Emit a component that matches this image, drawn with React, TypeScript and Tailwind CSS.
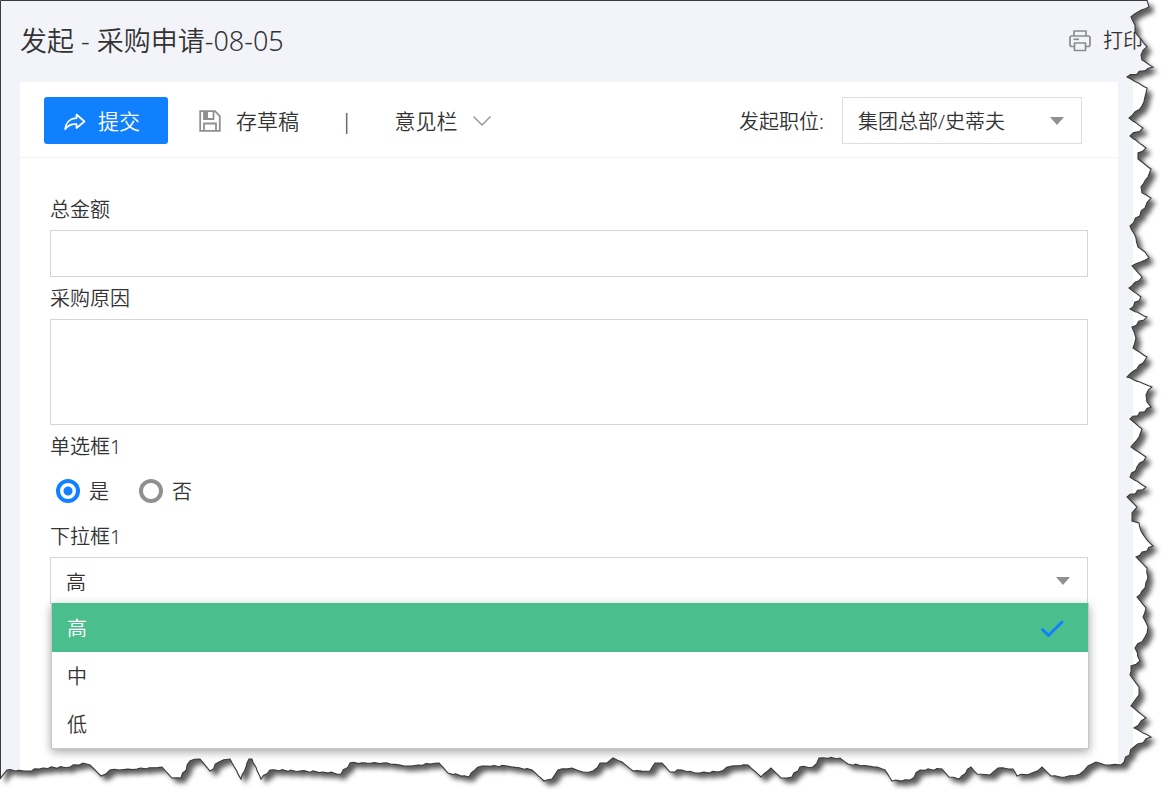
import React, { useState } from "react";

type Point = [number, number];

const levels = ["高", "中", "低"];

// torn page border, from the top right corner down and then back along the bottom
const rightEdge: Point[] = [
  [1147, 0], [1149, 7], [1138, 12], [1131, 17], [1135, 25], [1135, 32], [1147, 47], [1141, 55],
  [1142, 60], [1153, 67], [1127, 77], [1147, 88], [1145, 97], [1142, 106], [1129, 118], [1143, 128],
  [1130, 136], [1146, 148], [1138, 153], [1138, 159], [1151, 169], [1148, 177], [1141, 187], [1142, 193],
  [1151, 198], [1145, 208], [1130, 226], [1136, 238], [1138, 247], [1145, 252], [1149, 258], [1132, 266],
  [1142, 277], [1129, 288], [1141, 297], [1130, 309], [1147, 317], [1132, 327], [1136, 338], [1133, 348],
  [1147, 357], [1143, 363], [1127, 377], [1152, 387], [1146, 395], [1147, 402], [1151, 407], [1130, 419],
  [1142, 429], [1139, 437], [1131, 447], [1146, 457], [1137, 467], [1130, 477], [1146, 487], [1127, 497],
  [1137, 507], [1132, 513], [1132, 521], [1139, 523], [1141, 531], [1147, 540], [1153, 546], [1136, 557],
  [1147, 568], [1148, 578], [1145, 588], [1137, 597], [1146, 608], [1143, 617], [1148, 627], [1145, 637],
  [1135, 648], [1140, 661], [1131, 666], [1130, 675], [1139, 687], [1139, 695], [1131, 706], [1146, 718],
  [1134, 728], [1151, 737], [1134, 747], [1121, 765],
];

const bottomEdge: Point[] = [
  [1110, 765], [1105, 765], [1096, 762], [1088, 766], [1080, 774], [1065, 777], [1051, 776], [1042, 767],
  [1032, 773], [1017, 776], [1013, 769], [998, 768], [990, 775], [977, 774], [971, 767], [959, 779],
  [949, 777], [942, 769], [920, 770], [910, 780], [892, 781], [885, 770], [877, 767], [848, 764],
  [840, 758], [819, 758], [813, 767], [800, 767], [792, 777], [781, 778], [771, 768], [761, 777],
  [748, 765], [732, 766], [718, 772], [695, 773], [682, 770], [670, 772], [662, 763], [655, 763],
  [650, 771], [633, 771], [622, 762], [613, 758], [607, 763], [600, 763], [593, 771], [583, 772],
  [572, 768], [558, 770], [552, 779], [544, 781], [532, 770], [507, 766], [482, 766], [475, 770],
  [469, 777], [448, 773], [439, 763], [418, 765], [407, 766], [383, 763], [350, 763], [341, 774],
  [323, 772], [300, 771], [270, 770], [261, 779], [252, 759], [249, 759], [241, 779], [230, 759],
  [219, 762], [210, 771], [200, 759], [190, 761], [181, 778], [172, 778], [162, 767], [137, 769],
  [110, 770], [101, 776], [90, 765], [83, 763], [70, 767], [43, 768], [27, 771], [7, 770], [0, 779],
];

// breaks long segments up so that the tear looks rough
const roughen = (points: Point[]): Point[] => {
  const out: Point[] = [];
  points.forEach(([x, y], i) => {
    out.push([x, y]);
    const next = points[i + 1];
    if (!next) return;
    const steps = Math.floor(Math.hypot(next[0] - x, next[1] - y) / 4);
    for (let s = 1; s < steps; s++) {
      const t = s / steps;
      const wobble = Math.sin(i * 12.9 + s * 78.2) * 0.8;
      out.push([x + (next[0] - x) * t + wobble, y + (next[1] - y) * t + wobble]);
    }
  });
  return out;
};

const toPath = (points: Point[]) =>
  "M" + points.map(([x, y]) => `${x.toFixed(1)} ${y.toFixed(1)}`).join("L");

function TornEdge() {
  const line = toPath(roughen([...rightEdge, ...bottomEdge]));
  return (
    <svg
      viewBox="0 0 1174 803"
      preserveAspectRatio="none"
      aria-hidden="true"
      className="pointer-events-none absolute inset-0 z-20 h-full w-full"
    >
      <defs>
        <clipPath id="outside">
          <path d={`${line}L0 803L1174 803L1174 0Z`} />
        </clipPath>
        <filter id="soft" x="-5%" y="-5%" width="110%" height="110%">
          <feGaussianBlur stdDeviation="2.6" />
        </filter>
      </defs>
      <g clipPath="url(#outside)">
        <rect width="1174" height="803" fill="#fff" />
        <path d={`${line}L0 0Z`} transform="translate(5 5)" fill="#000" fillOpacity="0.64" filter="url(#soft)" />
      </g>
      <path d={line} fill="none" stroke="#3a3a3c" strokeWidth="1.1" />
      <path d="M0.5 779V0.5H1147" fill="none" stroke="#3a3a3c" />
    </svg>
  );
}

function ShareIcon() {
  return (
    <svg width="22" height="18" viewBox="0 0 22 18" fill="none" stroke="currentColor" strokeWidth="1.7" strokeLinejoin="round">
      <path d="M12.5 1.5L20.5 8.5L12.5 15V11.2C7.5 10.8 4 12.2 1.2 16.2C1.6 10.2 5.5 5.6 12.5 5.2Z" />
    </svg>
  );
}

function SaveIcon() {
  return (
    <svg width="22" height="22" viewBox="0 0 22 22" fill="none" stroke="currentColor" strokeWidth="1.8">
      <path d="M1.2 1.2H16L20.8 6V20.8H1.2Z" />
      <path d="M5 1.5V9H14.5V1.5" />
      <path d="M5 20.5V13.5H17V20.5" />
      <path d="M5 2H9V9H5Z" fill="currentColor" stroke="none" />
    </svg>
  );
}

function PrintIcon() {
  return (
    <svg width="22" height="22" viewBox="0 0 22 22" fill="none" stroke="currentColor" strokeWidth="1.7" strokeLinejoin="round">
      <path d="M5 6V1H17V6" />
      <path d="M5 16.5H2.8Q1 16.5 1 14.7V7.8Q1 6 2.8 6H19.2Q21 6 21 7.8V14.7Q21 16.5 19.2 16.5H17" />
      <path d="M5.5 13H16.5V20.5H5.5Z" />
      <path d="M4.5 9.3H10" />
    </svg>
  );
}

function Caret() {
  return (
    <svg width="14" height="8" viewBox="0 0 14 8" className="pointer-events-none" aria-hidden="true">
      <path d="M0 0H14L7 8Z" fill="#909090" />
    </svg>
  );
}

export default function App() {
  const [amount, setAmount] = useState("");
  const [reason, setReason] = useState("");
  const [choice, setChoice] = useState("是");
  const [level, setLevel] = useState("高");

  return (
    <div className="relative flex min-h-screen flex-col overflow-hidden bg-white font-['Noto_Sans','Noto_Sans_CJK_SC',sans-serif] text-xl font-[350] text-[#333]">
      <header className="flex h-[82px] items-center justify-between bg-[#f3f4fa] pr-[31px] pl-5">
        <h1 className="text-[27px] font-[350]">发起 - 采购申请-08-05</h1>
        <button className="flex items-center gap-3">
          <span className="text-[#8c8c8c]"><PrintIcon /></span>
          打印
        </button>
      </header>

      <div className="mr-[41px] flex flex-1 bg-[#f3f4fa] pr-[15px] pl-5">
        <main className="flex-1 bg-white">
          <div className="flex items-center justify-between border-b border-[#f3f3f5] pt-[15px] pr-9 pb-[13px] pl-6">
            <div className="flex items-center text-[21px]">
              <button className="flex h-[47px] items-center gap-3 rounded-[3px] bg-[#1180ff] pt-0.5 pr-7 pl-5 text-white">
                <ShareIcon />
                提交
              </button>
              <button className="ml-[31px] flex items-center gap-[15px] pt-0.5">
                <span className="text-[#909090]"><SaveIcon /></span>
                存草稿
              </button>
              <span className="mx-[42px] pt-0.5">|</span>
              <button className="flex items-center gap-4 pt-0.5">
                意见栏
                <svg width="18" height="10" viewBox="0 0 18 10" fill="none" stroke="#909090" strokeWidth="1.3">
                  <path d="M0.5 0.5L9 9L17.5 0.5" />
                </svg>
              </button>
            </div>
            <div className="flex items-center gap-[18px]">
              <label htmlFor="position" className="pt-0.5">发起职位:</label>
              <div className="relative flex items-center">
                <select id="position" className="h-[47px] w-60 appearance-none border border-[#ddd] bg-white px-[15px] pt-0.5">
                  <option>集团总部/史蒂夫</option>
                </select>
                <span className="pointer-events-none absolute right-[18px]"><Caret /></span>
              </div>
            </div>
          </div>

          <form className="flex flex-col px-[30px] pt-[30px]">
            <label htmlFor="amount" className="pt-0.5 leading-10">总金额</label>
            <input
              id="amount"
              value={amount}
              onChange={(e) => setAmount(e.target.value)}
              className="h-[47px] border border-[#d4d4de] px-[15px] outline-none"
            />
            <label htmlFor="reason" className="pt-0.5 leading-10">采购原因</label>
            <textarea
              id="reason"
              value={reason}
              onChange={(e) => setReason(e.target.value)}
              className="h-[106px] resize-none border border-[#d4d4de] px-[15px] py-2 outline-none"
            />
            <fieldset>
              <legend className="pt-0.5 leading-10">单选框1</legend>
              <div className="flex h-12 items-center gap-[30px] pl-1.5">
                {["是", "否"].map((item) => (
                  <label key={item} className="flex items-center gap-[9px]">
                    <input
                      type="radio"
                      name="choice"
                      checked={choice === item}
                      onChange={() => setChoice(item)}
                      className="h-6 w-6 appearance-none rounded-full border-4 border-[#909090] checked:border-[#1180ff] checked:bg-[radial-gradient(circle,#1180ff_4px,transparent_5px)]"
                    />
                    <span className="pt-0.5">{item}</span>
                  </label>
                ))}
              </div>
            </fieldset>
            <label htmlFor="level" className="pt-0.5 leading-10">下拉框1</label>
            <div className="relative">
              <div className="relative flex items-center">
                <select
                  id="level"
                  value={level}
                  onChange={(e) => setLevel(e.target.value)}
                  className="h-[47px] w-full appearance-none border border-[#d4d4de] bg-white px-[15px] pt-1 outline-none"
                >
                  {levels.map((item) => (
                    <option key={item}>{item}</option>
                  ))}
                </select>
                <span className="pointer-events-none absolute right-[18px]"><Caret /></span>
              </div>
              <ul
                role="listbox"
                aria-label="下拉框1"
                className="absolute top-[46px] -right-px left-px z-10 border border-t-0 border-[#c8c8c8] bg-white shadow-[0_3px_9px_rgba(0,0,0,0.35)]"
              >
                {levels.map((item) => (
                  <li
                    key={item}
                    role="option"
                    aria-selected={item === level}
                    onClick={() => setLevel(item)}
                    className="flex h-12 cursor-pointer items-center justify-between pt-0.5 pr-6 pl-[15px] first:h-[49px] aria-selected:bg-[#4bbe8e] aria-selected:text-white"
                  >
                    {item}
                    {item === level && (
                      <svg width="24" height="18" viewBox="0 0 24 18" fill="none" stroke="#1180ff" strokeWidth="3" strokeLinecap="round" strokeLinejoin="round">
                        <path d="M2.5 9.5L8.5 15.5L22 2" />
                      </svg>
                    )}
                  </li>
                ))}
              </ul>
            </div>
          </form>
        </main>
      </div>
      <TornEdge />
    </div>
  );
}
